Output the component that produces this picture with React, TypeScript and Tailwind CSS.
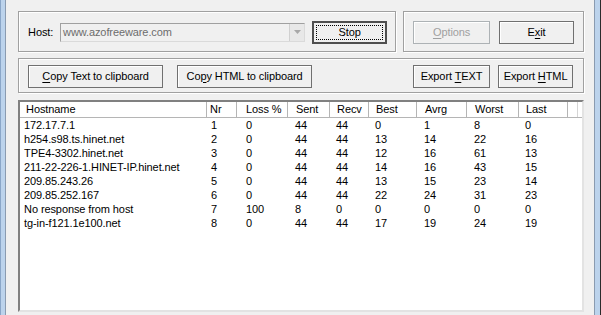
import React from "react";

const cols = [
  { label: "Hostname", w: "w-[187px]", pl: "pl-[6px]", rl: "pl-[4px]" },
  { label: "Nr", w: "w-[30px]", pl: "pl-[3px]", rl: "pl-[4px]" },
  { label: "Loss %", w: "w-[51px]", pl: "pl-[9px]", rl: "pl-[9px]" },
  { label: "Sent", w: "w-[42px]", pl: "pl-[8px]", rl: "pl-[7px]" },
  { label: "Recv", w: "w-[39px]", pl: "pl-[7px]", rl: "pl-[6px]" },
  { label: "Best", w: "w-[48px]", pl: "pl-[7px]", rl: "pl-[6px]" },
  { label: "Avrg", w: "w-[50px]", pl: "pl-[8px]", rl: "pl-[7px]" },
  { label: "Worst", w: "w-[52px]", pl: "pl-[8px]", rl: "pl-[7px]" },
  { label: "Last", w: "w-[49px]", pl: "pl-[7px]", rl: "pl-[6px]" },
];

const rows = [
  ["172.17.7.1", "1", "0", "44", "44", "0", "1", "8", "0"],
  ["h254.s98.ts.hinet.net", "2", "0", "44", "44", "13", "14", "22", "16"],
  ["TPE4-3302.hinet.net", "3", "0", "44", "44", "12", "16", "61", "13"],
  ["211-22-226-1.HINET-IP.hinet.net", "4", "0", "44", "44", "14", "16", "43", "15"],
  ["209.85.243.26", "5", "0", "44", "44", "13", "15", "23", "14"],
  ["209.85.252.167", "6", "0", "44", "44", "22", "24", "31", "23"],
  ["No response from host", "7", "100", "8", "0", "0", "0", "0", "0"],
  ["tg-in-f121.1e100.net", "8", "0", "44", "44", "17", "19", "24", "19"],
];

// mnemonic letter gets underlined, like a Win32 button caption
function Caption({ pre, key_, post }: { pre: string; key_: string; post: string }) {
  return (
    <span>
      {pre}
      <span className="underline underline-offset-[2px]">{key_}</span>
      {post}
    </span>
  );
}

function WinButton({
  w,
  disabled,
  children,
}: {
  w: string;
  disabled?: boolean;
  children: React.ReactNode;
}) {
  return (
    <div
      className={`${w} h-[23px] flex items-center justify-center border shadow-[inset_1px_1px_0_#ffffff] bg-[#f0f0f0] ${
        disabled ? "border-[#adb2b5] text-[#a0a0a0]" : "border-[#707070] text-black"
      }`}
    >
      {children}
    </div>
  );
}

function GroupBox({ className, children }: { className: string; children: React.ReactNode }) {
  return (
    <div
      className={`border border-[#a0a0a0] shadow-[inset_1px_1px_0_#ffffff,1px_1px_0_#ffffff] flex items-center ${className}`}
    >
      {children}
    </div>
  );
}

export default function App() {
  return (
    <div
      className="w-[601px] h-[315px] flex overflow-hidden text-[11px] leading-[13px] tracking-[-0.1px] text-black"
      style={{ fontFamily: '"Liberation Sans", Arial, sans-serif' }}
    >
      {/* left window frame */}
      <div className="w-[7px] flex">
        <div className="w-[1px] bg-[#8aa6c8]" />
        <div className="flex-1 bg-[#bcd3ec]" />
        <div className="w-[1px] bg-[#8a9bb0]" />
      </div>

      <div className="flex-1 bg-[#f0f0f0] pl-[12px] pr-[10px] pt-[11px] flex flex-col">
        {/* host + options */}
        <div className="flex gap-[7px]">
          <GroupBox className="w-[378px] h-[41px] pl-[9px] pt-[1px]">
            <span className="w-[32px]">Host:</span>
            <div className="w-[245px] h-[19px] border border-[#a0a0a0] border-r-[#dadada] border-b-[#dadada] bg-[#f0f0f0] flex items-center">
              <span className="flex-1 pl-[2px] text-[#6d6d6d]">www.azofreeware.com</span>
              <div className="w-[15px] h-[17px] bg-[#e8e8e8] border-l border-[#d0d0d0] flex items-center justify-center">
                <svg width="7" height="4" viewBox="0 0 7 4">
                  <path d="M0 0H7L3.5 4Z" fill="#a8a8a8" />
                </svg>
              </div>
            </div>
            <div className="ml-[7px] w-[75px] h-[23px] border-2 border-[#4f4f4f] bg-[#f0f0f0] p-[2px] flex">
              <div className="flex-1 border border-dotted border-black flex items-center justify-center">
                Stop
              </div>
            </div>
          </GroupBox>
          <GroupBox className="w-[181px] h-[41px] pl-[9px] pt-[1px] gap-[9px]">
            <WinButton w="w-[77px]" disabled>
              <Caption pre="" key_="O" post="ptions" />
            </WinButton>
            <WinButton w="w-[75px]">
              <Caption pre="E" key_="x" post="it" />
            </WinButton>
          </GroupBox>
        </div>

        {/* export buttons */}
        <GroupBox className="mt-[6px] h-[35px] pl-[9px] pr-[10px] pt-[1px]">
          <WinButton w="w-[135px]">
            <Caption pre="" key_="C" post="opy Text to clipboard" />
          </WinButton>
          <div className="ml-[14px]">
            <WinButton w="w-[135px]">
              <Caption pre="Co" key_="p" post="y HTML to clipboard" />
            </WinButton>
          </div>
          <div className="flex-1" />
          <WinButton w="w-[77px]">
            <Caption pre="Export " key_="T" post="EXT" />
          </WinButton>
          <div className="ml-[8px]">
            <WinButton w="w-[75px]">
              <Caption pre="Export " key_="H" post="TML" />
            </WinButton>
          </div>
        </GroupBox>

        {/* result list */}
        <div className="mt-[7px] h-[212px] border-l-2 border-t-2 border-l-[#808080] border-t-[#808080] border-r-2 border-b-2 border-r-[#e3e3e3] border-b-[#e3e3e3] bg-white flex flex-col">
          <div className="h-[16px] flex border-b border-[#b5b5b5] bg-white">
            {cols.map((c) => (
              <div
                key={c.label}
                className={`${c.w} ${c.pl} border-r border-[#b5b5b5] flex items-center whitespace-nowrap`}
              >
                {c.label}
              </div>
            ))}
            <div className="w-[10px] border-r border-[#d5d5d5]" />
          </div>
          {rows.map((r) => (
            <div key={r[1]} className="h-[14px] flex items-center">
              {r.map((v, i) => (
                <div key={i} className={`${cols[i].w} ${cols[i].rl} whitespace-nowrap`}>
                  {v}
                </div>
              ))}
            </div>
          ))}
        </div>
      </div>

      {/* right window frame */}
      <div className="w-[8px] flex">
        <div className="w-[1px] bg-[#8a9bb0]" />
        <div className="flex-1 bg-[#bcd3ec]" />
        <div className="w-[1px] bg-[#2b2b2b]" />
      </div>
    </div>
  );
}
